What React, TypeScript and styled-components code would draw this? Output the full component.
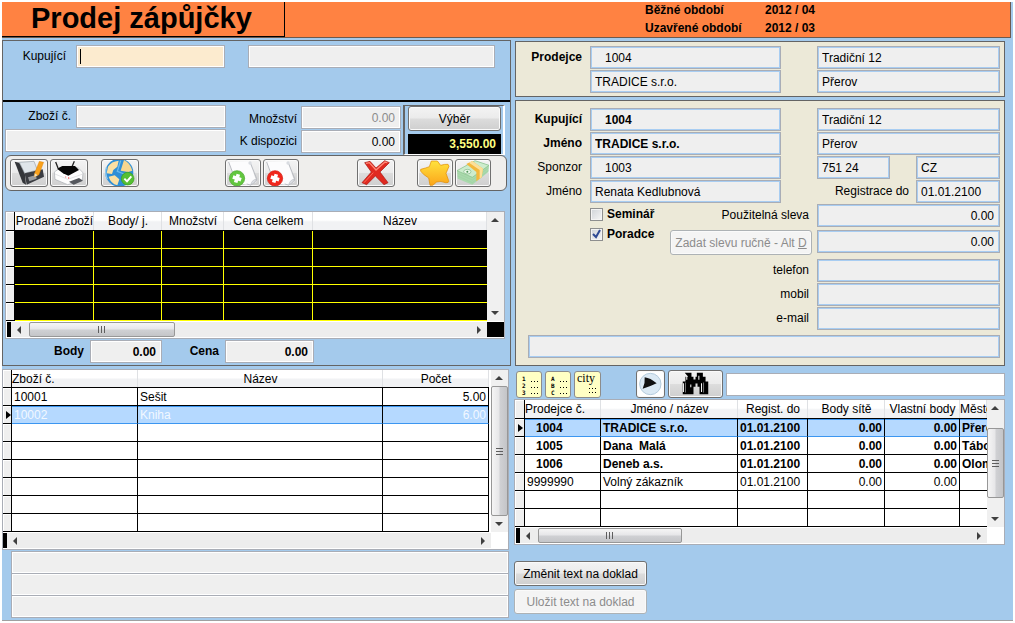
import React, { useId } from "react";
import styled, { createGlobalStyle, css } from "styled-components";

const GlobalStyle = createGlobalStyle`
  *, *::before, *::after { box-sizing: border-box; }
  body {
    margin: 0;
    background: #fff;
    font: 12px/16px "Liberation Sans", Arial, sans-serif;
    color: #000;
  }
  input, button, table { font: inherit; color: inherit; }
`;

const color = {
  blue: "#a4caec",
  orange: "#ff8242",
  sand: "#ece9d8",
  line: "#646464",
  field: "#efefef",
  fieldBorder: "#a9adb6",
  select: "#b5d9ff",
  selectLine: "#3c96f0",
};

/* ---------- page frame ---------- */

const Page = styled.main`
  margin: 2px;
  background: ${color.blue};
  border-bottom: 1px solid #a0a0a0;
`;

const Header = styled.header`
  display: flex;
  height: 36px;
  margin-right: 2px;
  background: ${color.orange};
  border: solid #6b5a50;
  border-width: 0 1px 1px 0;
`;

const Title = styled.h1`
  width: 283px;
  margin: 0;
  padding-left: 29px;
  font-size: 29px;
  line-height: 32px;
  font-weight: 700;
  border: solid #000;
  border-width: 0 1px 1px 0;
`;

const Periods = styled.dl`
  display: grid;
  grid-template-columns: 120px 245px;
  grid-auto-rows: 18px;
  margin: 0 0 0 auto;
  font-weight: 700;
  dd { margin: 0; }
`;

const Columns = styled.div`
  display: grid;
  grid-template-columns: minmax(0, 509fr) minmax(0, 491fr);
  gap: 3px;
  padding: 2px 8px 2px 0;
`;

const Column = styled.div`
  display: flex;
  flex-direction: column;
`;

/* ---------- fields ---------- */

const Label = styled.label<{ $bold?: boolean }>`
  line-height: 23px;
  text-align: right;
  white-space: nowrap;
  font-weight: ${(p) => (p.$bold ? 700 : 400)};
`;

const Field = styled.input<{
  $tone?: "white" | "blue";
  $indent?: boolean;
  $bold?: boolean;
  $right?: boolean;
  $width?: number;
}>`
  display: block;
  flex: ${(p) => (p.$width ? "none" : "1 1 0")};
  width: ${(p) => (p.$width ? `${p.$width}px` : "100%")};
  min-width: 0;
  height: 23px;
  padding: 0 5px 0 ${(p) => (p.$indent ? 14 : 4)}px;
  border: 1px solid ${color.fieldBorder};
  border-radius: 0;
  box-shadow: inset 0 0 0 1px ${(p) => (p.$tone === "blue" ? "#a8cdf2" : "#fff")};
  background: ${color.field};
  font-weight: ${(p) => (p.$bold ? 700 : 400)};
  text-align: ${(p) => (p.$right ? "right" : "left")};
  outline: none;
  &:disabled { color: #8c8c8c; }
`;

/* The focused field shows a steady caret while it is empty. */
const ActiveField = styled(Field)`
  background: #fcebcf;
  &:placeholder-shown {
    caret-color: transparent;
    background: linear-gradient(#000, #000) 3px 3px / 1px 15px no-repeat #fcebcf;
  }
`;

const pushFace = css`
  border: 1px solid #707070;
  border-radius: 3px;
  background: linear-gradient(#f3f3f3, #ebebeb 48%, #dcdcdc 52%, #cfcfcf);
  box-shadow: inset 0 0 0 1px #fafafa;
`;

const PushButton = styled.button`
  ${pushFace}
  height: 25px;
  padding: 0;
  &:disabled {
    color: #8c8c8c;
    border-color: #adb2b5;
    background: #f4f4f4;
  }
`;

/* ---------- sale panel ---------- */

const SalePanel = styled.section`
  border: 1px solid ${color.line};
  height: 326px;
`;

const BuyerRow = styled.div`
  display: grid;
  grid-template-columns: 63px minmax(0, 149fr) minmax(0, 260fr);
  column-gap: 10px;
  height: 61px;
  padding: 4px 15px 0 0;
  border-bottom: 2px solid #000;
  & > :last-child { margin-left: 13px; width: auto; }
`;

const GoodsRow = styled.div`
  display: flex;
  padding: 3px 5px 0 2px;
  height: 53px;
`;

const GoodsFields = styled.div`
  flex: 1;
  display: flex;
  flex-direction: column;
  gap: 1px;
`;

const GoodsLine = styled.div<{ $gap?: number }>`
  display: flex;
  justify-content: flex-end;
  gap: ${(p) => p.$gap ?? 5}px;
`;

const GoodsCode = styled(Label)`
  width: 66px;
`;

const Amounts = styled.div`
  display: flex;
  flex-direction: column;
  gap: 1px;
  width: 175px;
  padding-top: 1px;
`;

const AmountLabel = styled(Label)`
  height: 23px;
  line-height: 26px;
`;

const PickBox = styled.div`
  display: flex;
  flex-direction: column;
  gap: 3px;
  width: 102px;
  margin-left: 2px;
  padding: 0 2px 0 3px;
  border: solid;
  border-width: 1px 2px 1px 2px;
  border-color: ${color.line} #fff #fff ${color.line};
`;

const PickTotal = styled.output`
  height: 20px;
  padding-right: 5px;
  background: #000;
  color: #ffff80;
  font-weight: 700;
  line-height: 20px;
  text-align: right;
`;

const Toolbar = styled.div`
  display: flex;
  height: 36px;
  margin: 0 3px 20px 2px;
  padding: 3px 4px;
  background: #efeeec;
  border: 1px solid ${color.line};
  border-radius: 6px;
`;

const ToolGroup = styled.div<{ $before?: number }>`
  display: flex;
  gap: 2px;
  margin-left: ${(p) => p.$before ?? 0}px;
`;

const Tool = styled.button<{ $width: number }>`
  ${pushFace}
  width: ${(p) => p.$width}px;
  height: 28px;
  padding: 0;
  overflow: hidden;
  svg { display: block; width: 100%; height: 100%; }
`;

const Totals = styled.div`
  display: flex;
  margin-top: 1px;
`;

const TotalLabel = styled(Label)<{ $width: number }>`
  width: ${(p) => p.$width}px;
  padding-right: 6px;
`;

/* ---------- grids ---------- */

const GridFrame = styled.div`
  border: 1px solid ${color.fieldBorder};
  background: #fff;
`;

const SoldFrame = styled(GridFrame)`
  margin: 0 5px 0 2px;
`;

const GoodsFrame = styled(GridFrame)`
  margin: 3px 2px 1px 0;
`;

const GridBody = styled.div<{ $gap?: number }>`
  display: flex;
  gap: ${(p) => p.$gap ?? 0}px;
`;

const Table = styled.table<{ $line: string; $fill: string; $head: number; $open?: boolean }>`
  flex: 1 1 0;
  width: 0;
  min-width: 0;
  table-layout: fixed;
  border-collapse: separate;
  border-spacing: 0;
  th, td {
    height: 18px;
    padding: 0;
    overflow: hidden;
    white-space: pre;
    line-height: 16px;
    border: 0 solid ${(p) => p.$line};
  }
  thead th {
    height: ${(p) => p.$head}px;
    font-weight: 400;
    text-align: center;
    background: linear-gradient(#fff 45%, #f1f2f4 55%);
    border-bottom: 1px solid #000;
    box-shadow: inset -1px 0 #dfe1e4;
  }
  thead th.left { text-align: left; }
  tbody td {
    padding: 0 2px;
    background: ${(p) => p.$fill};
    border-width: 0 1px 1px 0;
  }
  tbody tr > td:first-child { border-color: #000; }
  tr > :first-child {
    padding: 0;
    background: #efefef;
    border-right: 1px solid #000;
    box-shadow: inset 1px 1px #fff;
  }
  ${(p) => p.$open && "tbody td:last-child { border-right-width: 0; }"}
`;

const Row = styled.tr<{ $selected?: boolean; $bold?: boolean; $pale?: boolean }>`
  font-weight: ${(p) => (p.$bold ? 700 : 400)};
  ${(p) =>
    p.$selected &&
    css`
      && td:not(:first-child) {
        background: ${color.select};
        border-bottom-color: ${color.selectLine};
        box-shadow: inset 0 1px ${color.selectLine};
        ${p.$pale && "color: #f2f8ff;"}
      }
    `}
`;

const Num = styled.td`
  text-align: right;
`;

const Code = styled.td<{ $indent?: boolean }>`
  && { padding-left: ${(p) => (p.$indent ? 11 : 2)}px; }
`;

const VBar = styled.div`
  display: flex;
  flex-direction: column;
  width: 17px;
  background: #f0f0f0;
`;

const HBar = styled.div`
  flex: 1;
  display: flex;
  background: #ededed;
`;

const GridFoot = styled.div<{ $inset?: number }>`
  display: flex;
  height: 17px;
  padding: 1px 0 1px ${(p) => p.$inset ?? 0}px;
`;

const FootMark = styled.span`
  width: 4px;
  background: #000;
`;

const Corner = styled.span<{ $dark?: boolean }>`
  width: 17px;
  background: ${(p) => (p.$dark ? "#000" : "#fff")};
`;

const ArrowButton = styled.button`
  width: 16px;
  height: 16px;
  padding: 0;
  border: 0;
  background: transparent;
  svg { display: block; margin: auto; }
`;

const Track = styled.div<{ $vertical?: boolean }>`
  flex: 1;
  display: flex;
  flex-direction: ${(p) => (p.$vertical ? "column" : "row")};
`;

const Space = styled.span<{ $part: number }>`
  flex: ${(p) => p.$part} 0 0;
`;

const Thumb = styled.span<{ $part: number; $vertical?: boolean }>`
  flex: ${(p) => p.$part} 0 0;
  display: flex;
  align-items: center;
  justify-content: center;
  border: 1px solid #979797;
  border-radius: 2px;
  background: linear-gradient(
    ${(p) => (p.$vertical ? "to right" : "to bottom")},
    #f5f5f5, #e6e6e8 48%, #d0d1d4 52%, #c4c5c8
  );
`;

/* ---------- partner panels ---------- */

const Panel = styled.section<{ $top: number; $bottom: number }>`
  display: grid;
  grid-template-columns: 74px minmax(0, 191fr) 36px minmax(0, 183fr);
  grid-auto-rows: 24px;
  margin: 1px 0 2px 1px;
  padding: ${(p) => p.$top}px 4px ${(p) => p.$bottom}px 0;
  background: ${color.sand};
  border: 1px solid ${color.line};
`;

const BuyerPanel = styled(Panel)`
  grid-template-rows: 24px 24px 24px 24px 26px 29px 24px 24px 28px 23px;
`;

const SideLabel = styled(Label)`
  grid-column: 1;
  padding-right: 8px;
`;

const Left = styled.div`
  grid-column: 2;
`;

const Right = styled.div<{ $row?: number }>`
  grid-column: 4;
  grid-row: ${(p) => p.$row ?? "auto"};
  display: flex;
  align-items: flex-start;
  justify-content: space-between;
`;

const RightLabel = styled(Label)`
  flex: 1;
  padding-right: 7px;
`;

const Checks = styled.div`
  grid-column: 2;
  grid-row: 5 / span 2;
  display: flex;
  flex-direction: column;
  align-items: flex-start;
`;

const Middle = styled.div<{ $row: number }>`
  grid-column: 2 / 4;
  grid-row: ${(p) => p.$row};
  justify-self: end;
  padding-right: 5px;
`;

const MiddleLabel = styled(Label)`
  grid-column: 2 / 4;
  padding-right: 8px;
`;

const DiscountLabel = styled(Label)`
  padding-right: 3px;
`;

const Wide = styled.div`
  grid-column: 1 / -1;
  margin-left: 12px;
`;

const CheckLabel = styled.label`
  display: flex;
  align-items: center;
  gap: 4px;
  height: 20px;
  font-weight: 700;
`;

const Check = styled.input`
  appearance: none;
  width: 13px;
  height: 13px;
  margin: 0;
  border: 1px solid #8e8f8f;
  background: linear-gradient(135deg, #cfd3d8, #f6f6f6);
  box-shadow: inset 0 0 0 1px #f4f4f4;
`;

const CheckBox = styled.span`
  position: relative;
  display: flex;
  svg { position: absolute; left: 2px; top: 1px; pointer-events: none; visibility: hidden; }
  input:checked + svg { visibility: visible; }
`;

const ManualButton = styled(PushButton)`
  width: 142px;
`;

/* ---------- search ---------- */

const SearchRow = styled.div`
  display: flex;
  align-items: center;
  height: 28px;
  margin: 2px 0 1px;
  padding-left: 2px;
  gap: 3px;
`;

const NoteButton = styled.button<{ $width: number }>`
  width: ${(p) => p.$width}px;
  height: 27px;
  padding: 0;
  background: #ffffc4;
  border: 1px solid #8c8c8c;
  border-radius: 3px;
  svg { display: block; }
`;

const PlayButton = styled(Tool)`
  margin-left: 32px;
  background: #fff;
`;

const SearchField = styled(Field)`
  background: #fff;
`;

const DocButtons = styled.div`
  display: flex;
  flex-direction: column;
  gap: 3px;
  width: 133px;
  margin-top: 16px;
`;

const Notes = styled.div`
  margin: 0 2px 0 9px;
  border-top: 1px solid ${color.fieldBorder};
`;

const NoteLine = styled(Field)`
  height: 22px;
  border-top: 0;
`;

/* ---------- small drawings ---------- */

const arrows = {
  up: "M0 4 L4 0 L8 4 Z",
  down: "M0 0 L8 0 L4 4 Z",
  left: "M4 0 L4 8 L0 4 Z",
  right: "M0 0 L4 4 L0 8 Z",
};

function Arrow({ dir }: { dir: keyof typeof arrows }) {
  const flat = dir === "up" || dir === "down";
  return (
    <ArrowButton aria-label={dir}>
      <svg width={flat ? 8 : 4} height={flat ? 4 : 8}>
        <path d={arrows[dir]} fill="#404040" />
      </svg>
    </ArrowButton>
  );
}

function Grip({ vertical }: { vertical?: boolean }) {
  return (
    <svg width="9" height="9" stroke="#5e5e5e" strokeWidth="1">
      <path d={vertical ? "M1 1.5H8M1 4.5H8M1 7.5H8" : "M1.5 1V8M4.5 1V8M7.5 1V8"} />
    </svg>
  );
}

function Pointer() {
  return (
    <svg width="8" height="8" display="block">
      <path d="M3 0 L8 4 L3 8 Z" fill="#000" />
    </svg>
  );
}

const FloppyIcon = () => (
  <svg viewBox="33 30 108 78">
    <path d="M44 35 L58 38 L74 66 L78 104 L68 98 Z" fill="#34363a" />
    <path d="M58 37 L102 34 L112 60 L74 70 Z" fill="#dfe5ea" stroke="#9aa3ab" strokeWidth="2" />
    <path d="M74 70 L128 58 L132 80 L80 104 Z" fill="#3b3d42" />
    <path d="M84 82 L108 75 L110 86 L88 94 Z" fill="#9b9da0" />
    <path d="M118 34 L131 37 L117 74 L103 81 L104 69 Z" fill="#f9a11b" stroke="#d67a00" strokeWidth="1" />
    <path d="M104 70 L103 81 L113 76 Z" fill="#f3dfb6" />
  </svg>
);

const PrinterIcon = () => (
  <svg viewBox="154 30 108 78">
    <path d="M168 36 L175 54 M224 34 L217 50" stroke="#222" strokeWidth="4" />
    <path d="M164 66 L184 52 L236 54 L250 68 L248 90 L204 104 L166 88 Z" fill="#fdfdfd" stroke="#a9aeb3" strokeWidth="2" />
    <path d="M166 72 L204 88 L250 72" stroke="#d4d7da" strokeWidth="2" fill="none" />
    <path d="M172 56 L188 48 L226 48 L238 60 L206 77 L190 70 Z" fill="#050505" />
    <path d="M208 95 L238 84 L250 92 L222 104 Z" fill="#55585d" />
    <circle cx="207" cy="84" r="2" fill="#e33" />
    <circle cx="198" cy="81" r="2" fill="#e88" />
  </svg>
);

const GlobeIcon = () => (
  <svg viewBox="306 30 108 78">
    <circle cx="358" cy="68" r="42" fill="#2f8fd6" />
    <path d="M324 50 Q334 34 356 32 L352 50 L340 60 L336 72 L320 70 Z" fill="#fbe0a3" />
    <path d="M326 80 L344 76 L358 88 L352 106 Q332 100 326 80 Z" fill="#fbe0a3" />
    <path d="M372 30 Q390 38 397 62 L384 66 L362 62 Z" fill="#f6d68f" />
    <path d="M319 52 Q314 68 322 88" stroke="#8fcaf0" strokeWidth="4" fill="none" />
    <path d="M362 32 L352 64 L372 72" stroke="#6db9ea" strokeWidth="4" fill="none" />
    <circle cx="383" cy="86" r="19" fill="#56bf34" stroke="#36a01a" strokeWidth="2" />
    <path d="M373 86 L381 94 L394 79" stroke="#fff" strokeWidth="6" fill="none" />
  </svg>
);

function PageIcon({ tone, edge }: { tone: string; edge: string }) {
  return (
    <svg viewBox="0 0 102 78">
      <path d="M8 6 L18 34 L30 68 L74 76 L92 66 L70 4 Z" fill="#fcfcfd" />
      <path d="M8 6 L20 38 M72 6 L92 56 Q94 66 74 75 L62 72" stroke="#b9bcc2" strokeWidth="3" fill="none" />
      <path d="M74 75 Q78 58 92 58 Z" fill="#e4e6ea" stroke="#b9bcc2" strokeWidth="2" />
      <circle cx="72" cy="9" r="5" fill="#d9dce1" />
      <circle cx="33" cy="55" r="23" fill={tone} stroke={edge} strokeWidth="2" />
      <path d="M33 42 V68 M20 55 H46" stroke="#fff" strokeWidth="11" transform="rotate(18 33 55)" />
    </svg>
  );
}

const CrossIcon = () => (
  <svg viewBox="324 30 108 78">
    <path
      d="M344 38 L360 34 L378 54 L404 32 L418 38 L390 66 L414 98 L402 104 L376 78 L350 104 L336 98 L364 66 Z"
      fill="#e02a20"
      stroke="#a81510"
      strokeWidth="2"
    />
    <path d="M348 40 L358 38 L378 60 L405 36 L412 38" stroke="#ff8a78" strokeWidth="4" fill="none" />
    <path d="M342 98 L370 68" stroke="#ff6a58" strokeWidth="3" />
  </svg>
);

const StarIcon = () => (
  <svg viewBox="504 30 102 78">
    <defs>
      <linearGradient id="star" x1="0" y1="0" x2="0" y2="1">
        <stop offset="0" stopColor="#ffe23e" />
        <stop offset="1" stopColor="#fba51a" />
      </linearGradient>
    </defs>
    <path
      d="M512 58 Q528 54 538 50 L544 33 L562 33 L572 46 Q584 42 594 43 Q600 48 594 56 L588 70 L596 92 Q598 99 586 98 Q572 92 560 96 L548 106 L540 106 L536 84 Q520 74 512 64 Z"
      fill="url(#star)"
      stroke="#e08a00"
      strokeWidth="2"
    />
  </svg>
);

const MoneyIcon = () => (
  <svg viewBox="615 30 102 78">
    <path d="M618 62 L672 32 L714 46 L712 66 L664 104 L620 86 Z" fill="#a9d9ac" />
    <path d="M618 62 L672 32 L714 46 L664 82 Z" fill="#cdeccd" stroke="#86bf8a" strokeWidth="2" />
    <path d="M620 70 L664 90 L712 54 M620 78 L664 98 L712 62" stroke="#9fd0a3" strokeWidth="2" fill="none" />
    <ellipse cx="649" cy="65" rx="11" ry="7" fill="#e9f8e7" stroke="#7db583" strokeWidth="2" />
    <circle cx="649" cy="65" r="3" fill="#4d9357" />
    <path d="M646 42 L664 33 L696 56 L692 82 L676 94 L676 66 Z" fill="#f3b83c" />
    <path d="M654 38 L664 33 L696 56 L692 82 L686 86 L686 60 Z" fill="#fbe09a" />
  </svg>
);

const Dots = ({ y }: { y: number }) => (
  <path d={`M14 ${y}.5h1m2 0h1m2 0h1`} stroke="#000" strokeWidth="1" />
);

function ListIcon({ marks }: { marks: string[] }) {
  return (
    <svg width="24" height="25">
      {marks.map((m, i) => (
        <text
          key={m}
          x="5"
          y={9 + i * 7}
          fontSize="6"
          fontWeight="700"
          fontFamily="DejaVu Sans Mono, monospace"
        >
          {m}
        </text>
      ))}
      <Dots y={9} />
      <Dots y={15} />
      <Dots y={21} />
    </svg>
  );
}

const CityIcon = () => (
  <svg width="25" height="25">
    <text x="2" y="10" fontSize="12" fontFamily="Liberation Serif, serif">
      city
    </text>
    <Dots y={16} />
    <Dots y={20} />
  </svg>
);

const PlayIcon = () => (
  <svg viewBox="381 28 81 72">
    <circle cx="421" cy="64" r="32" fill="#dbe9f4" stroke="#b4cbdc" strokeWidth="3" />
    <path d="M404 44 Q421 46 440 62 Q420 72 398 78 Q406 62 404 44 Z" fill="#111" />
  </svg>
);

const BinocularIcon = () => (
  <svg viewBox="481 28 158 73">
    <path
      d="M528 31 h20 v12 h6 v8 h6 v-8 h4 v-12 h18 v12 h8 v14 h8 v38 h-26 v-22 h-6 v-10 h-6 v10 h-6 v22 h-32 v-38 h8 v-14 h8 Z"
      fill="#000"
    />
    <path d="M534 40 V52 M524 62 V88 M570 40 V52 M578 62 V88 M546 66 V74" stroke="#fff" strokeWidth="3" />
    <path d="M530 60 V90 M584 60 V90" stroke="#777" strokeWidth="3" />
  </svg>
);

/* ---------- data ---------- */

const goods = [
  { code: "10001", name: "Sešit", count: "5.00" },
  { code: "10002", name: "Kniha", count: "6.00", selected: true },
];

const partners = [
  { code: "1004", name: "TRADICE s.r.o.", until: "01.01.2100", net: "0.00", own: "0.00", city: "Přerov", bold: true, selected: true },
  { code: "1005", name: "Dana  Malá", until: "01.01.2100", net: "0.00", own: "0.00", city: "Tábor", bold: true },
  { code: "1006", name: "Deneb a.s.", until: "01.01.2100", net: "0.00", own: "0.00", city: "Olomouc", bold: true },
  { code: "9999990", name: "Volný zákazník", until: "01.01.2100", net: "0.00", own: "0.00", city: "", bold: false },
];

const blanks = (rows: number, cells: number) =>
  Array.from({ length: rows }, (_, r) => (
    <Row key={`blank-${r}`}>
      {Array.from({ length: cells }, (_, c) => (
        <td key={c} />
      ))}
    </Row>
  ));

const Cols = ({ widths }: { widths: (number | null)[] }) => (
  <colgroup>
    {widths.map((w, i) => (
      <col key={i} width={w ?? undefined} />
    ))}
  </colgroup>
);

function HorizontalBar({ before, size, after }: { before?: number; size?: number; after?: number }) {
  return (
    <HBar>
      <Arrow dir="left" />
      <Track>
        {before ? <Space $part={before} /> : null}
        {size ? (
          <Thumb $part={size}>
            <Grip />
          </Thumb>
        ) : null}
        <Space $part={after ?? 1} />
      </Track>
      <Arrow dir="right" />
    </HBar>
  );
}

function VerticalBar({ before, size, after }: { before?: number; size?: number; after?: number }) {
  return (
    <VBar>
      <Arrow dir="up" />
      <Track $vertical>
        {before ? <Space $part={before} /> : null}
        {size ? (
          <Thumb $part={size} $vertical>
            <Grip vertical />
          </Thumb>
        ) : null}
        {after ? <Space $part={after} /> : null}
      </Track>
      <Arrow dir="down" />
    </VBar>
  );
}

function CheckField({ text, checked }: { text: string; checked?: boolean }) {
  return (
    <CheckLabel>
      <CheckBox>
        <Check type="checkbox" defaultChecked={checked} />
        <svg width="9" height="10">
          <path d="M1 5 L4 8 L8 1" stroke="#2f4a94" strokeWidth="2" fill="none" />
        </svg>
      </CheckBox>
      {text}
    </CheckLabel>
  );
}

export default function App() {
  const id = useId();
  return (
    <>
      <GlobalStyle />
      <Page>
        <Header>
          <Title>Prodej zápůjčky</Title>
          <Periods>
            <dt>Běžné období</dt>
            <dd>2012 / 04</dd>
            <dt>Uzavřené období</dt>
            <dd>2012 / 03</dd>
          </Periods>
        </Header>

        <Columns>
          <Column>
            <SalePanel>
              <BuyerRow>
                <Label htmlFor={`${id}buyer`}>Kupující</Label>
                <ActiveField id={`${id}buyer`} placeholder=" " autoFocus />
                <Field aria-label="Jméno kupujícího" readOnly />
              </BuyerRow>

              <GoodsRow>
                <GoodsFields>
                  <GoodsLine>
                    <GoodsCode htmlFor={`${id}code`}>Zboží č.</GoodsCode>
                    <Field id={`${id}code`} />
                  </GoodsLine>
                  <GoodsLine>
                    <Field aria-label="Název zboží" readOnly />
                  </GoodsLine>
                </GoodsFields>
                <Amounts>
                  <GoodsLine $gap={4}>
                    <AmountLabel htmlFor={`${id}qty`}>Množství</AmountLabel>
                    <Field id={`${id}qty`} $right $width={100} disabled defaultValue="0.00" />
                  </GoodsLine>
                  <GoodsLine $gap={4}>
                    <Label htmlFor={`${id}stock`}>K dispozici</Label>
                    <Field id={`${id}stock`} $right $width={100} readOnly defaultValue="0.00" />
                  </GoodsLine>
                </Amounts>
                <PickBox>
                  <PushButton>Výběr</PushButton>
                  <PickTotal>3,550.00</PickTotal>
                </PickBox>
              </GoodsRow>

              <Toolbar>
                <ToolGroup>
                  <Tool $width={38} aria-label="Uložit"><FloppyIcon /></Tool>
                  <Tool $width={38} aria-label="Tisk"><PrinterIcon /></Tool>
                </ToolGroup>
                <ToolGroup $before={13}>
                  <Tool $width={38} aria-label="Odeslat"><GlobeIcon /></Tool>
                </ToolGroup>
                <ToolGroup $before={86}>
                  <Tool $width={36} aria-label="Přidat řádek"><PageIcon tone="#62c63f" edge="#46a528" /></Tool>
                  <Tool $width={36} aria-label="Smazat řádek"><PageIcon tone="#f0271c" edge="#d3150c" /></Tool>
                </ToolGroup>
                <ToolGroup $before={58}>
                  <Tool $width={38} aria-label="Zrušit"><CrossIcon /></Tool>
                </ToolGroup>
                <ToolGroup $before={22}>
                  <Tool $width={36} aria-label="Akce"><StarIcon /></Tool>
                  <Tool $width={36} aria-label="Platba"><MoneyIcon /></Tool>
                </ToolGroup>
              </Toolbar>

              <SoldFrame>
                <GridBody>
                  <Table $line="#ffff00" $fill="#000" $head={19} $open>
                    <Cols widths={[9, 79, 68, 62, 89, null]} />
                    <thead>
                      <tr>
                        <th />
                        <th>Prodané zboží</th>
                        <th>Body/ j.</th>
                        <th>Množství</th>
                        <th>Cena celkem</th>
                        <th>Název</th>
                      </tr>
                    </thead>
                    <tbody>{blanks(5, 6)}</tbody>
                  </Table>
                  <VerticalBar />
                </GridBody>
                <GridFoot $inset={1}>
                  <FootMark />
                  <HorizontalBar before={2} size={145} after={299} />
                  <Corner $dark />
                </GridFoot>
              </SoldFrame>

              <Totals>
                <TotalLabel $bold $width={87} htmlFor={`${id}points`}>Body</TotalLabel>
                <Field id={`${id}points`} $right $bold $width={72} readOnly defaultValue="0.00" />
                <TotalLabel $bold $width={63} htmlFor={`${id}price`}>Cena</TotalLabel>
                <Field id={`${id}price`} $right $bold $width={89} readOnly defaultValue="0.00" />
              </Totals>
            </SalePanel>

            <GoodsFrame>
              <GridBody $gap={2}>
                <Table $line="#000" $fill="#fff" $head={18}>
                  <Cols widths={[9, 126, null, 106]} />
                  <thead>
                    <tr>
                      <th />
                      <th className="left">Zboží č.</th>
                      <th>Název</th>
                      <th>Počet</th>
                    </tr>
                  </thead>
                  <tbody>
                    {goods.map((g) => (
                      <Row key={g.code} $selected={g.selected} $pale>
                        <td>{g.selected && <Pointer />}</td>
                        <td>{g.code}</td>
                        <td>{g.name}</td>
                        <Num>{g.count}</Num>
                      </Row>
                    ))}
                    {blanks(6, 4)}
                  </tbody>
                </Table>
                <VerticalBar size={1} />
              </GridBody>
              <GridFoot>
                <FootMark />
                <HorizontalBar />
                <Corner />
              </GridFoot>
            </GoodsFrame>

            <Notes>
              <NoteLine aria-label="Text na doklad 1" readOnly />
              <NoteLine aria-label="Text na doklad 2" readOnly />
              <NoteLine aria-label="Text na doklad 3" readOnly />
            </Notes>
          </Column>

          <Column>
            <Panel $top={4} $bottom={2}>
              <SideLabel $bold htmlFor={`${id}seller`}>Prodejce</SideLabel>
              <Left><Field id={`${id}seller`} $tone="blue" $indent readOnly defaultValue="1004" /></Left>
              <Right><Field aria-label="Ulice" $tone="blue" readOnly defaultValue="Tradiční 12" /></Right>
              <Left><Field aria-label="Název prodejce" $tone="blue" readOnly defaultValue="TRADICE s.r.o." /></Left>
              <Right><Field aria-label="Město" $tone="blue" readOnly defaultValue="Přerov" /></Right>
            </Panel>

            <BuyerPanel $top={7} $bottom={7}>
              <SideLabel $bold htmlFor={`${id}b1`}>Kupující</SideLabel>
              <Left><Field id={`${id}b1`} $tone="blue" $indent $bold readOnly defaultValue="1004" /></Left>
              <Right><Field aria-label="Ulice kupujícího" $tone="blue" readOnly defaultValue="Tradiční 12" /></Right>

              <SideLabel $bold htmlFor={`${id}b2`}>Jméno</SideLabel>
              <Left><Field id={`${id}b2`} $tone="blue" $bold readOnly defaultValue="TRADICE s.r.o." /></Left>
              <Right><Field aria-label="Město kupujícího" $tone="blue" readOnly defaultValue="Přerov" /></Right>

              <SideLabel htmlFor={`${id}b3`}>Sponzor</SideLabel>
              <Left><Field id={`${id}b3`} $tone="blue" $indent readOnly defaultValue="1003" /></Left>
              <Right>
                <Field aria-label="PSČ" $tone="blue" $width={73} readOnly defaultValue="751 24" />
                <Field aria-label="Stát" $tone="blue" $width={84} readOnly defaultValue="CZ" />
              </Right>

              <SideLabel htmlFor={`${id}b4`}>Jméno</SideLabel>
              <Left><Field id={`${id}b4`} $tone="blue" readOnly defaultValue="Renata Kedlubnová" /></Left>
              <Right>
                <RightLabel htmlFor={`${id}reg`}>Registrace do</RightLabel>
                <Field id={`${id}reg`} $tone="blue" $width={84} readOnly defaultValue="01.01.2100" />
              </Right>

              <Checks>
                <CheckField text="Seminář" />
                <CheckField text="Poradce" checked />
              </Checks>
              <Middle $row={5}>
                <DiscountLabel htmlFor={`${id}disc`}>Použitelná sleva</DiscountLabel>
              </Middle>
              <Right $row={5}><Field id={`${id}disc`} $tone="blue" $right readOnly defaultValue="0.00" /></Right>
              <Middle $row={6}>
                <ManualButton disabled>Zadat slevu ručně - Alt <u>D</u></ManualButton>
              </Middle>
              <Right $row={6}><Field aria-label="Ruční sleva" $tone="blue" $right readOnly defaultValue="0.00" /></Right>

              <MiddleLabel htmlFor={`${id}tel`}>telefon</MiddleLabel>
              <Right><Field id={`${id}tel`} $tone="blue" readOnly /></Right>
              <MiddleLabel htmlFor={`${id}mob`}>mobil</MiddleLabel>
              <Right><Field id={`${id}mob`} $tone="blue" readOnly /></Right>
              <MiddleLabel htmlFor={`${id}mail`}>e-mail</MiddleLabel>
              <Right><Field id={`${id}mail`} $tone="blue" readOnly /></Right>
              <Wide><Field aria-label="Poznámka" $tone="blue" readOnly /></Wide>
            </BuyerPanel>

            <SearchRow>
              <NoteButton $width={26} aria-label="Řadit podle čísla"><ListIcon marks={["1", "2", "3"]} /></NoteButton>
              <NoteButton $width={26} aria-label="Řadit podle jména"><ListIcon marks={["A", "B", "C"]} /></NoteButton>
              <NoteButton $width={27} aria-label="Řadit podle města"><CityIcon /></NoteButton>
              <PlayButton $width={29} aria-label="Další"><PlayIcon /></PlayButton>
              <Tool $width={55} aria-label="Hledat"><BinocularIcon /></Tool>
              <SearchField aria-label="Hledaný text" />
            </SearchRow>

            <GridFrame>
              <GridBody>
                <Table $line="#000" $fill="#fff" $head={19} $open>
                  <Cols widths={[10, 76, null, 70, 77, 75, 27]} />
                  <thead>
                    <tr>
                      <th />
                      <th className="left">Prodejce č.</th>
                      <th>Jméno / název</th>
                      <th>Regist. do</th>
                      <th>Body sítě</th>
                      <th>Vlastní body</th>
                      <th className="left">Město</th>
                    </tr>
                  </thead>
                  <tbody>
                    {partners.map((p) => (
                      <Row key={p.code} $selected={p.selected} $bold={p.bold}>
                        <td>{p.selected && <Pointer />}</td>
                        <Code $indent={p.bold}>{p.code}</Code>
                        <td>{p.name}</td>
                        <td>{p.until}</td>
                        <Num>{p.net}</Num>
                        <Num>{p.own}</Num>
                        <td>{p.city}</td>
                      </Row>
                    ))}
                    {blanks(2, 7)}
                  </tbody>
                </Table>
                <VerticalBar before={12} size={70} after={13} />
              </GridBody>
              <GridFoot $inset={1}>
                <FootMark />
                <HorizontalBar before={2} size={142} after={290} />
                <Corner />
              </GridFoot>
            </GridFrame>

            <DocButtons>
              <PushButton>Změnit text na doklad</PushButton>
              <PushButton disabled>Uložit text na doklad</PushButton>
            </DocButtons>
          </Column>
        </Columns>
      </Page>
    </>
  );
}
